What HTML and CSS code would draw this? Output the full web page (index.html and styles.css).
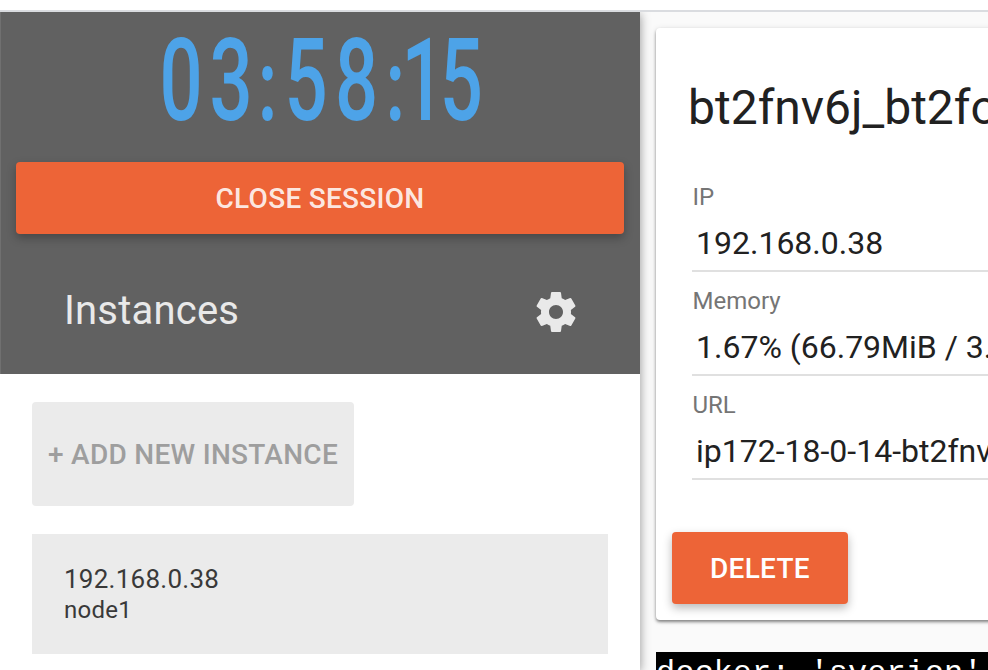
FILE: index.html
```html
<!DOCTYPE html>
<html lang="en">
<head>
<meta charset="utf-8">
<title>Session</title>
<link rel="stylesheet" href="styles.css">
</head>
<body>
<div class="topbar"></div>
<div class="layout">
  <aside class="sidebar">
    <header class="panel">
      <svg class="clock" viewBox="0 0 640 150" role="img">
        <g transform="scale(.66 1)"><text y="108" x="274.2 350 405.3 463.6 540.2 599 641 699">03<tspan class="colon">:</tspan>58<tspan class="colon">:</tspan>15</text></g>
      </svg>
      <button class="btn close">CLOSE SESSION</button>
      <div class="toolbar">
        <h1>Instances</h1>
        <svg class="gear" viewBox="0 0 24 24"><path d="M19.43 12.98c.04-.32.07-.64.07-.98s-.03-.66-.07-.98l2.11-1.65c.19-.15.24-.42.12-.64l-2-3.46c-.12-.22-.39-.3-.61-.22l-2.49 1c-.52-.4-1.08-.73-1.69-.98l-.38-2.65C14.46 2.18 14.25 2 14 2h-4c-.25 0-.46.18-.49.42l-.38 2.65c-.61.25-1.17.59-1.69.98l-2.49-1c-.23-.09-.49 0-.61.22l-2 3.46c-.13.22-.07.49.12.64l2.11 1.65c-.04.32-.07.65-.07.98s.03.66.07.98l-2.11 1.65c-.19.15-.24.42-.12.64l2 3.46c.12.22.39.3.61.22l2.49-1c.52.4 1.08.73 1.69.98l.38 2.65c.03.24.24.42.49.42h4c.25 0 .46-.18.49-.42l.38-2.65c.61-.25 1.17-.59 1.69-.98l2.49 1c.23.09.49 0 .61-.22l2-3.46c.12-.22.07-.49-.12-.64l-2.11-1.65zM12 15.5c-1.93 0-3.5-1.57-3.5-3.5s1.57-3.5 3.5-3.5 3.5 1.57 3.5 3.5-1.57 3.5-3.5 3.5z"/></svg>
      </div>
    </header>
    <div class="list">
      <button class="add">+ ADD NEW INSTANCE</button>
      <div class="instance">
        <div class="ip">192.168.0.38</div>
        <div class="node">node1</div>
      </div>
    </div>
  </aside>
  <main class="content">
    <section class="card">
      <h2>bt2fnv6j_bt2fo</h2>
      <div class="field"><label>IP</label><div class="value">192.168.0.38</div></div>
      <div class="field"><label>Memory</label><div class="value">1.67% (66.79MiB / 3.</div></div>
      <div class="field"><label>URL</label><div class="value">ip172-18-0-14-bt2fnv</div></div>
      <button class="btn delete">DELETE</button>
    </section>
    <pre class="terminal">docker: 'sverion'</pre>
  </main>
</div>
</body>
</html>
```
FILE: styles.css
```css
* { box-sizing: border-box; }
body { margin: 0; width: 988px; height: 670px; overflow: hidden; background: #fafafa; font-family: Roboto, sans-serif; color: #212121; }
button { border: 0; padding: 0; font: 500 28px Roboto, sans-serif; letter-spacing: .28px; }
h1, h2, pre { margin: 0; font-weight: 400; }
.topbar { height: 12px; background: #fff; border-bottom: 2px solid #dadce0; }
.layout { display: flex; height: 658px; overflow: hidden; }
.sidebar { flex: 0 0 640px; background: #fff; box-shadow: 0 2px 10px rgba(0,0,0,.42); clip-path: inset(0 -30px 0 0); z-index: 1; }
.panel { height: 362px; background: #616161; border-left: 1px solid #707070; }
.clock { display: block; width: 640px; height: 150px; margin-left: -1px; }
.clock text { font: 500 115px Roboto, sans-serif; fill: #4da3e8; text-anchor: middle; }
.clock .colon { font-size: 100px; font-weight: 700; }
.btn { display: block; height: 72px; border-radius: 4px; background: #ed6437; color: #fff; box-shadow: 0 4px 10px rgba(0,0,0,.28); }
.close { width: 608px; margin-left: 15px; color: rgba(255,255,255,.87); }
.toolbar { display: flex; justify-content: space-between; align-items: center; height: 128px; margin-top: 14px; padding: 0 60px 0 63px; }
.toolbar h1 { font-size: 40px; line-height: 48px; letter-spacing: .2px; color: #e9e9e9; margin-top: -2px; }
.gear { width: 48px; height: 48px; fill: #e9e9e9; }
.list { padding: 28px 32px; }
.add { display: block; width: 322px; height: 104px; border-radius: 4px; background: #ebebeb; color: #9e9e9e; }
.instance { height: 120px; margin-top: 28px; padding: 30px 32px; background: #ebebeb; color: #393939; }
.ip { font-size: 26px; line-height: 31px; letter-spacing: .26px; }
.node { font-size: 24px; line-height: 30px; letter-spacing: .24px; }
.content { flex: 1; min-width: 0; padding: 16px 0 0 16px; }
.card { width: 700px; height: 592px; padding: 48px 16px 16px; border-radius: 4px; background: #fff; box-shadow: 0 2px 3px rgba(0,0,0,.42), 0 1px 6px rgba(0,0,0,.12); }
.card h2 { padding-left: 16px; margin-bottom: 28px; font-size: 48px; line-height: 64px; white-space: nowrap; }
.field { height: 104px; margin-left: 20px; border-bottom: 2px solid #e0e0e0; padding-top: 15px; white-space: nowrap; }
.field label { display: block; font-size: 24px; line-height: 28px; color: #757575; padding-left: .5px; }
.value { padding: 13px 4px 0; font-size: 32px; line-height: 38px; }
.delete { width: 176px; margin-top: 52px; }
.terminal { width: 700px; height: 60px; margin-top: 32px; padding-top: 4px; background: #000; color: #fff; font: 32px/36px "Liberation Mono", monospace; }
```
